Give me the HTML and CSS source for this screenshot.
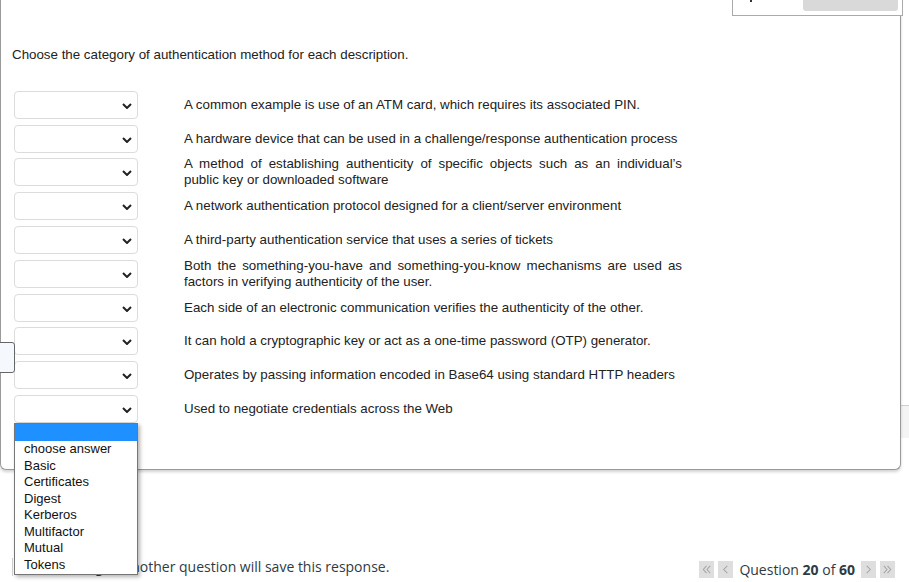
FILE: index.html
```html
<!DOCTYPE html>
<html>
<head>
<meta charset="utf-8">
<link rel="stylesheet" href="styles.css">
</head>
<body>
<div class="page">
  <div class="side-band"></div>
  <div class="panel">
    <p class="question">Choose the category of authentication method for each description.</p>
    <div class="rows">
      <div class="row"><div class="sel"><svg class="chev" viewBox="0 0 10 6"><path d="M1 1 L5 5 L9 1" /></svg></div><div class="desc">A common example is use of an ATM card, which requires its associated PIN.</div></div>
      <div class="row"><div class="sel"><svg class="chev" viewBox="0 0 10 6"><path d="M1 1 L5 5 L9 1" /></svg></div><div class="desc">A hardware device that can be used in a challenge/response authentication process</div></div>
      <div class="row"><div class="sel"><svg class="chev" viewBox="0 0 10 6"><path d="M1 1 L5 5 L9 1" /></svg></div><div class="desc">A method of establishing authenticity of specific objects such as an individual’s public key or downloaded software</div></div>
      <div class="row"><div class="sel"><svg class="chev" viewBox="0 0 10 6"><path d="M1 1 L5 5 L9 1" /></svg></div><div class="desc">A network authentication protocol designed for a client/server environment</div></div>
      <div class="row"><div class="sel"><svg class="chev" viewBox="0 0 10 6"><path d="M1 1 L5 5 L9 1" /></svg></div><div class="desc">A third-party authentication service that uses a series of tickets</div></div>
      <div class="row"><div class="sel"><svg class="chev" viewBox="0 0 10 6"><path d="M1 1 L5 5 L9 1" /></svg></div><div class="desc">Both the something-you-have and something-you-know mechanisms are used as factors in verifying authenticity of the user.</div></div>
      <div class="row"><div class="sel"><svg class="chev" viewBox="0 0 10 6"><path d="M1 1 L5 5 L9 1" /></svg></div><div class="desc">Each side of an electronic communication verifies the authenticity of the other.</div></div>
      <div class="row"><div class="sel"><svg class="chev" viewBox="0 0 10 6"><path d="M1 1 L5 5 L9 1" /></svg></div><div class="desc">It can hold a cryptographic key or act as a one-time password (OTP) generator.</div></div>
      <div class="row"><div class="sel"><svg class="chev" viewBox="0 0 10 6"><path d="M1 1 L5 5 L9 1" /></svg></div><div class="desc">Operates by passing information encoded in Base64 using standard HTTP headers</div></div>
      <div class="row"><div class="sel"><svg class="chev" viewBox="0 0 10 6"><path d="M1 1 L5 5 L9 1" /></svg></div><div class="desc">Used to negotiate credentials across the Web</div></div>
    </div>
  </div>
  <div class="top-box"><span class="mark"></span><div class="top-bar"></div></div>
  <div class="side-tab"></div>
  <div class="footer">
    <div class="notice">Moving to another question will save this response.</div>
    <div class="pager">
      <span class="pbtn"><svg viewBox="0 0 12 12"><path d="M6 2 L2.5 6 L6 10 M10 2 L6.5 6 L10 10"/></svg></span><span class="pbtn"><svg viewBox="0 0 12 12"><path d="M8 2 L4 6 L8 10"/></svg></span>
      <span class="pinfo">Question <b>20</b> of <b>60</b></span>
      <span class="pbtn"><svg viewBox="0 0 12 12"><path d="M4 2 L8 6 L4 10"/></svg></span><span class="pbtn"><svg viewBox="0 0 12 12"><path d="M2 2 L5.5 6 L2 10 M6 2 L9.5 6 L6 10"/></svg></span>
    </div>
  </div>
  <ul class="dropdown">
    <li class="hl"></li>
    <li>choose answer</li>
    <li>Basic</li>
    <li>Certificates</li>
    <li>Digest</li>
    <li>Kerberos</li>
    <li>Multifactor</li>
    <li>Mutual</li>
    <li>Tokens</li>
  </ul>
</div>
</body>
</html>
```
FILE: styles.css
```css
html, body {
  margin: 0;
  padding: 0;
  background: #fff;
}
.page {
  position: relative;
  width: 909px;
  height: 582px;
  overflow: hidden;
  font-family: "Liberation Sans", Arial, sans-serif;
  color: #222;
}
.panel {
  position: relative;
  width: 899px;
  height: 469px;
  border: 1px solid #9a9a9a;
  border-top: 0;
  border-radius: 0 0 6px 6px;
  box-shadow: 0 2px 3px rgba(0,0,0,0.18);
  background: #fff;
  box-sizing: content-box;
}
.question {
  margin: 0;
  padding: 47px 0 0 11px;
  font-size: 13.33px;
  line-height: 16px;
}
.rows {
  margin-top: 25px;
  padding-left: 13px;
  display: flex;
  flex-direction: column;
}
.row {
  display: flex;
  align-items: center;
  min-height: 33.8px;
  gap: 46px;
}
.sel {
  position: relative;
  width: 124px;
  height: 28px;
  box-sizing: border-box;
  border: 1px solid #dcdcdc;
  border-radius: 4px;
  background: #fff;
  flex: none;
}
.chev {
  position: absolute;
  right: 5px;
  top: 11px;
  width: 10px;
  height: 6px;
}
.chev path {
  fill: none;
  stroke: #222;
  stroke-width: 2;
}
.desc {
  width: 498px;
  font-size: 13.33px;
  line-height: 16px;
  text-align: justify;
}
.side-band {
  position: absolute;
  left: 901px;
  top: 405px;
  width: 8px;
  height: 32px;
  background: #f4f4f4;
  border-top: 1px solid #cfcfcf;
}
.top-box {
  position: absolute;
  left: 732px;
  top: -20px;
  width: 169px;
  height: 34px;
  border: 1px solid #aaa;
  background: #fff;
}
.mark {
  position: absolute;
  left: 17px;
  top: 18px;
  width: 2px;
  height: 3px;
  background: #333;
}
.top-bar {
  position: absolute;
  left: 70px;
  top: 0;
  width: 95px;
  height: 30px;
  background: #d9d9d9;
  border-radius: 0 0 3px 3px;
}
.side-tab {
  position: absolute;
  left: -4px;
  top: 342px;
  width: 17px;
  height: 29px;
  border: 1px solid #666;
  border-radius: 3px;
  background: #f5f8fc;
}
.footer {
  position: absolute;
  left: 0;
  top: 548px;
  width: 909px;
  height: 32px;
  display: flex;
  align-items: center;
  font-family: "Open Sans", sans-serif;
  font-size: 14px;
  color: #2d3b45;
}
.notice {
  margin-left: 12px;
  padding-left: 42px;
  border-left: 1px solid #d0d0d0;
  line-height: 18px;
  height: 18px;
  margin-top: 5px;
}
.pager {
  margin-left: auto;
  margin-right: 14px;
  display: flex;
  align-items: center;
  gap: 4px;
  margin-top: 10px;
}
.pbtn {
  display: inline-flex;
  justify-content: center;
  align-items: center;
  width: 15px;
  height: 17px;
  background: #dedede;
}
.pbtn svg {
  width: 11px;
  height: 11px;
}
.pbtn path {
  fill: none;
  stroke: #a5a5a5;
  stroke-width: 1.1;
}
.pinfo {
  margin: 0 2px;
}
.dropdown {
  position: absolute;
  left: 14px;
  top: 423px;
  width: 124px;
  height: 152px;
  box-sizing: border-box;
  margin: 0;
  padding: 0;
  list-style: none;
  border: 1px solid #767676;
  background: #fff;
  box-shadow: 2px 2px 4px rgba(0,0,0,0.3);
  font-family: "Liberation Sans", Arial, sans-serif;
  font-size: 13px;
  color: #111;
}
.dropdown li {
  height: 16.5px;
  line-height: 16.5px;
  padding-left: 9px;
}
.dropdown li.hl {
  height: 17px;
  background: #1e90ff;
}
```
